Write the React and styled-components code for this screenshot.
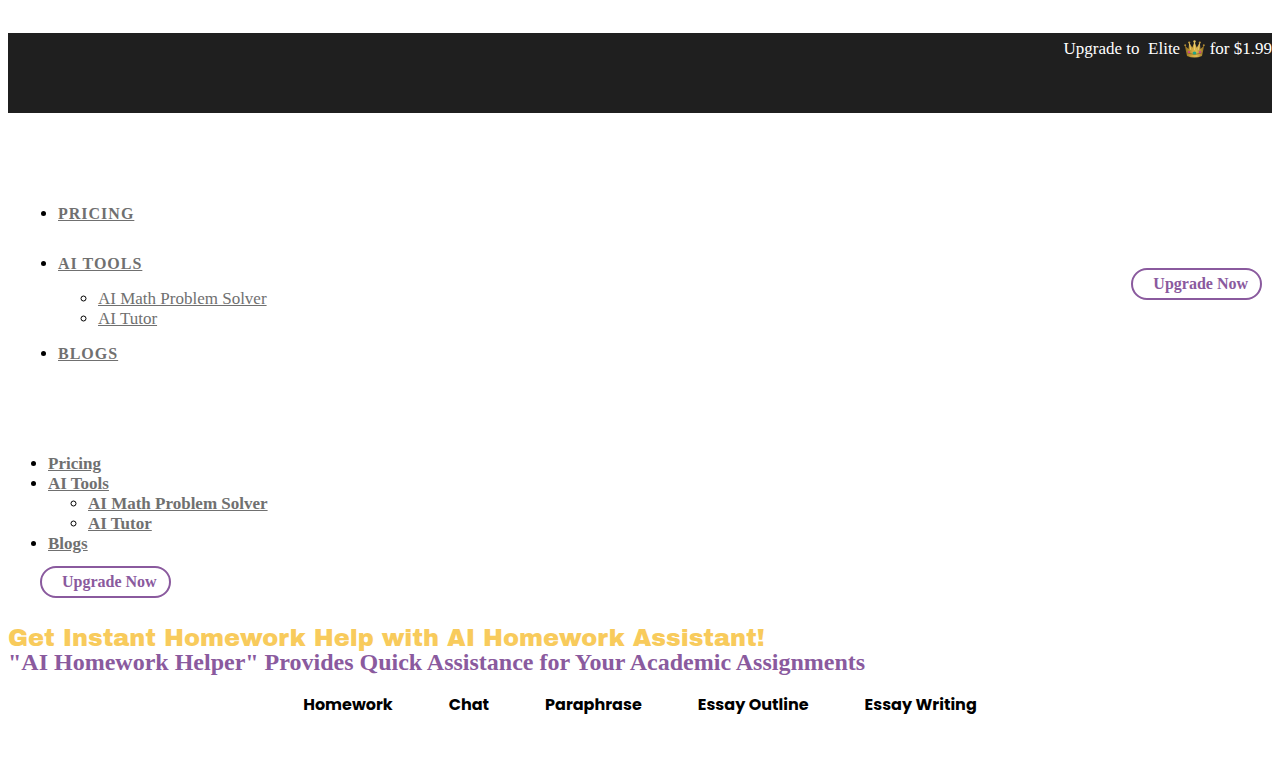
import React, { useState } from 'react';
import styled, { createGlobalStyle } from 'styled-components';

const GlobalStyle = createGlobalStyle`
  body {
    margin: 8px;
    background: #ffffff;
    color: #000000;
    font-family: "Liberation Serif", "Times New Roman", serif;
    font-size: 17px;
    line-height: 20px;
  }
`;

const tools = ['AI Math Problem Solver', 'AI Tutor'];
const modes = ['Homework', 'Chat', 'Paraphrase', 'Essay Outline', 'Essay Writing'];

const CrownIcon = () => (
  <svg width="21" height="20" viewBox="0 0 21 20" aria-hidden="true">
    <defs>
      <linearGradient id="gold" x1="0" x2="1">
        <stop offset="0" stopColor="#8f6c1e" />
        <stop offset="0.4" stopColor="#d2aa3e" />
        <stop offset="0.6" stopColor="#dcb850" />
        <stop offset="1" stopColor="#906d22" />
      </linearGradient>
    </defs>
    <path d="M3 17 L0.8 6.5 L4.5 10 L5.2 3.5 L8.3 8.8 L10.5 2.5 L12.7 8.8 L15.8 3.5 L16.5 10 L20.2 6.5 L18 17 Q10.5 20 3 17Z" fill="url(#gold)" />
    <path d="M5.2 3.5 L6.8 11 M15.8 3.5 L14.2 11 M10.5 3 V11" fill="none" stroke="#edd078" strokeWidth="0.8" />
    <path d="M3.2 14 Q10.5 17 17.8 14" fill="none" stroke="#806321" strokeWidth="0.7" />
    <circle cx="1.2" cy="6.2" r="1" fill="#b18b35" />
    <circle cx="5.2" cy="3.5" r="1.1" fill="#c29b3c" />
    <circle cx="10.5" cy="2.5" r="1.2" fill="#e4c45f" />
    <circle cx="15.8" cy="3.5" r="1.1" fill="#c29b3c" />
    <circle cx="19.8" cy="6.2" r="1" fill="#b18b35" />
    <ellipse cx="10.5" cy="14" rx="1.9" ry="1.5" fill="#22a886" />
    <circle cx="5" cy="13.1" r="1.2" fill="#c6428c" />
    <circle cx="16" cy="13.1" r="1.2" fill="#c6428c" />
  </svg>
);

const HomePage = () => {
  const [mode, setMode] = useState('Homework');

  return (
    <>
      <GlobalStyle />
      <PromoBar>
        <PromoText>
          Upgrade to&nbsp; Elite <CrownIcon /> for $1.99
        </PromoText>
      </PromoBar>

      <Header>
        <nav aria-label="Main">
          <MainMenu>
            <li><MainLink href="#pricing">Pricing</MainLink></li>
            <li>
              <MainLink href="#tools">AI Tools</MainLink>
              <SubMenu>
                {tools.map((tool) => (
                  <li key={tool}><SubLink href="#tools">{tool}</SubLink></li>
                ))}
              </SubMenu>
            </li>
            <li><MainLink href="#blogs">Blogs</MainLink></li>
          </MainMenu>
        </nav>
        <UpgradeButton type="button">Upgrade Now</UpgradeButton>
      </Header>

      {/* Mobile menu */}
      <MobileNav aria-label="Mobile">
        <MobileMenu>
          <li><MobileLink href="#pricing">Pricing</MobileLink></li>
          <li>
            <MobileLink href="#tools">AI Tools</MobileLink>
            <SubMenu>
              {tools.map((tool) => (
                <li key={tool}><MobileLink href="#tools">{tool}</MobileLink></li>
              ))}
            </SubMenu>
          </li>
          <li><MobileLink href="#blogs">Blogs</MobileLink></li>
        </MobileMenu>
        <UpgradeButton type="button">Upgrade Now</UpgradeButton>
      </MobileNav>

      <main>
        <Title>Get Instant Homework Help with AI Homework Assistant!</Title>
        <Subtitle>"AI Homework Helper" Provides Quick Assistance for Your Academic Assignments</Subtitle>
        <ModeTabs>
          {modes.map((name) => (
            <ModeTab key={name} type="button" aria-pressed={mode === name} onClick={() => setMode(name)}>
              {name}
            </ModeTab>
          ))}
        </ModeTabs>
      </main>
    </>
  );
};

// Styled components
const PromoBar = styled.div`
  box-sizing: border-box;
  height: 80px;
  margin-top: 25px;
  padding-top: 6px;
  background-color: #1f1f1f;
  color: #ffffff;
`;

const PromoText = styled.p`
  margin: 0;
  text-align: right;

  svg {
    vertical-align: -5px;
  }
`;

const Header = styled.header`
  display: flex;
  align-items: center;
  justify-content: space-between;
  padding: 76px 10px 0;
`;

const MainMenu = styled.ul`
  margin: 0;
  padding-left: 40px;
`;

const SubMenu = styled.ul`
  margin: 0;
  padding-left: 40px;
`;

const MainLink = styled.a`
  color: #707070;
  font-size: 16px;
  font-weight: bold;
  line-height: 50px;
  letter-spacing: 1px;
  text-transform: uppercase;
`;

const SubLink = styled.a`
  color: #707070;
`;

const UpgradeButton = styled.button`
  height: 32px;
  padding: 0 12px 0 20px;
  border: 2px solid #8a5a9e;
  border-radius: 16px;
  background: transparent;
  color: #8a5a9e;
  font-family: inherit;
  font-size: 16px;
  font-weight: bold;
  cursor: pointer;
`;

const MobileNav = styled.nav`
  padding-top: 75px;

  > button {
    margin-left: 32px;
  }
`;

const MobileMenu = styled.ul`
  margin: 0 0 12px;
  padding-left: 40px;
`;

const MobileLink = styled.a`
  color: #707070;
  font-weight: bold;
`;

const Title = styled.h1`
  margin: 28px 0 0;
  color: #f8cb5c;
  font-family: "Archivo Black", "Arial Black", Inter, sans-serif;
  font-size: 24px;
  font-weight: 400;
  line-height: 24px;
`;

const Subtitle = styled.h2`
  margin: 0;
  color: #8a5a9e;
  font-size: 24px;
  line-height: 24px;
`;

const ModeTabs = styled.div`
  display: flex;
  flex-wrap: wrap;
  justify-content: center;
  gap: 56px;
  margin-top: 21px;
`;

const ModeTab = styled.button`
  padding: 0;
  border: none;
  background: none;
  color: #000000;
  font-family: Poppins, Inter, sans-serif;
  font-size: 16px;
  font-weight: 700;
  line-height: 20px;
  cursor: pointer;
`;

export default HomePage;
